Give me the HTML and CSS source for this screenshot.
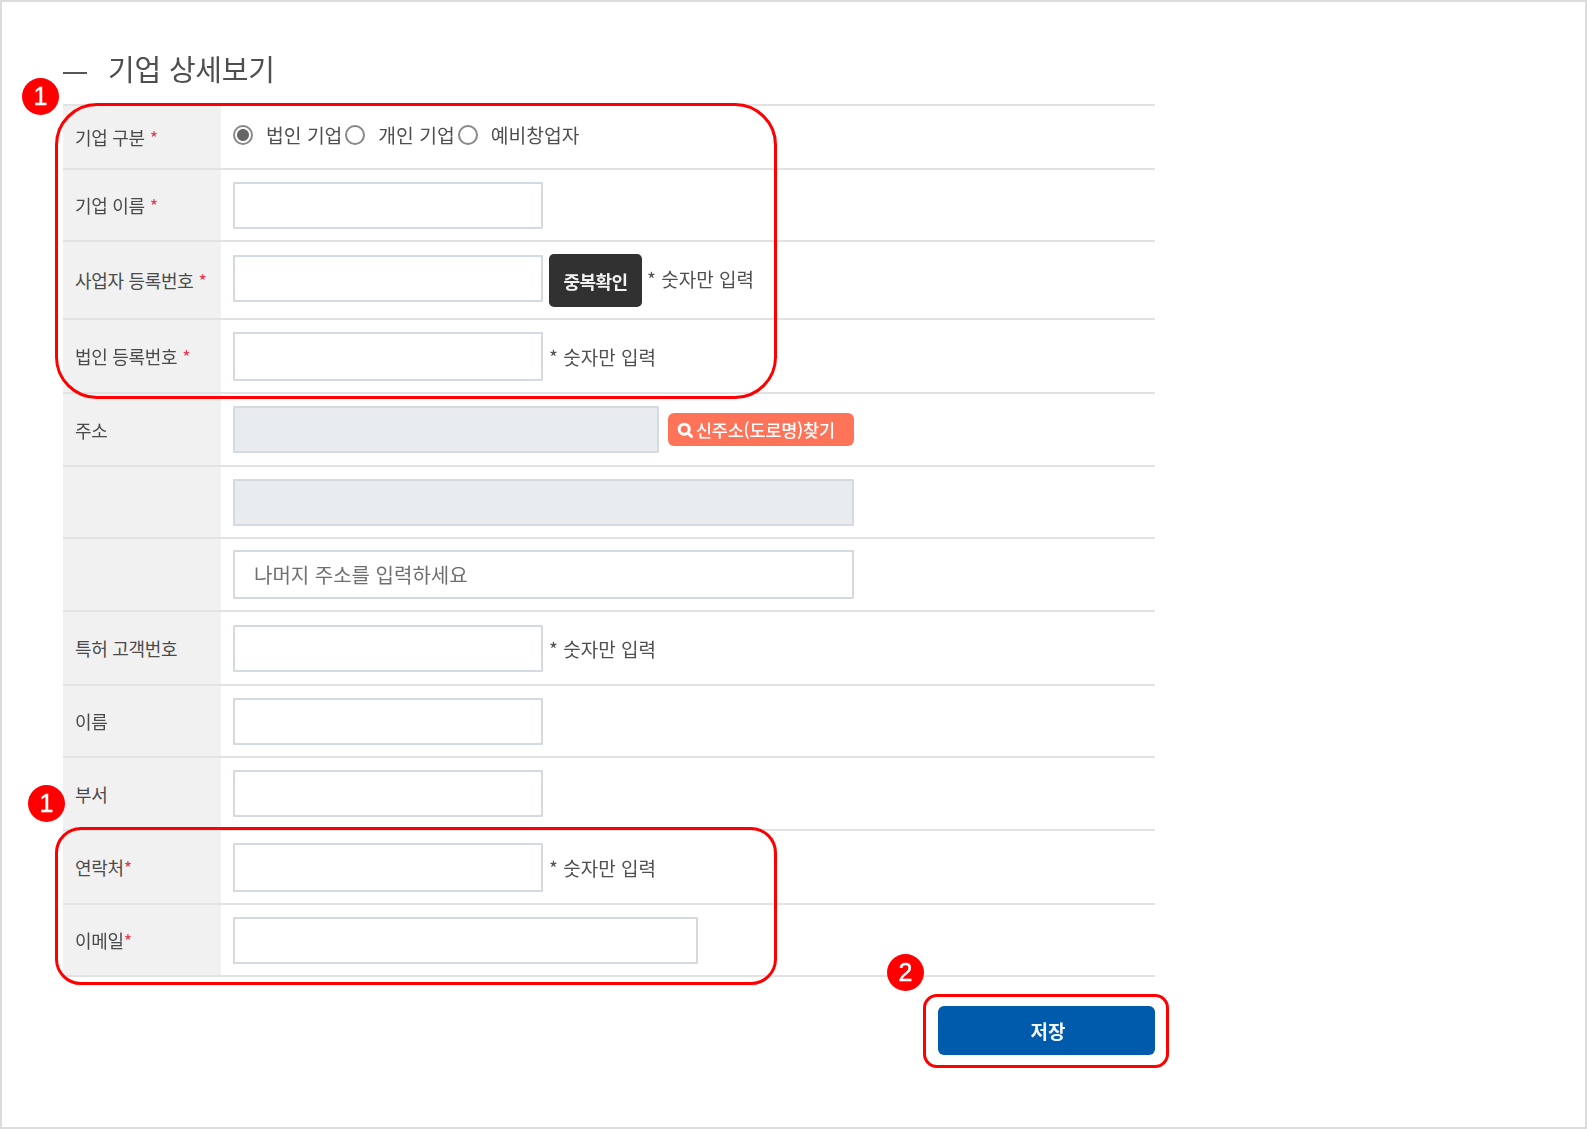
FILE: index.html
```html
<!DOCTYPE html>
<html lang="ko">
<head>
<meta charset="utf-8">
<title>기업 상세보기</title>
<link rel="stylesheet" href="styles.css">
</head>
<body>
<main class="frame">
  <h1 class="title"><span class="dash"></span>기업 상세보기</h1>
  <form class="form">
    <div class="label">기업 구분<em>*</em></div>
    <div class="value radios">
      <label class="radio"><input type="radio" name="kind" checked>법인 기업</label>
      <label class="radio"><input type="radio" name="kind">개인 기업</label>
      <label class="radio"><input type="radio" name="kind">예비창업자</label>
    </div>

    <div class="label">기업 이름<em>*</em></div>
    <div class="value"><input class="field"></div>

    <div class="label">사업자 등록번호<em>*</em></div>
    <div class="value"><input class="field lift"><button type="button" class="btn-dark">중복확인</button><span class="hint hint-tight">* 숫자만 입력</span></div>

    <div class="label">법인 등록번호<em>*</em></div>
    <div class="value"><input class="field tall"><span class="hint">* 숫자만 입력</span></div>

    <div class="label">주소</div>
    <div class="value"><input class="field addr" disabled><button type="button" class="btn-orange"><svg class="search" viewBox="0 0 16 16" width="16" height="16"><circle cx="7.2" cy="7.2" r="5" fill="none" stroke="#fff" stroke-width="3"/><path d="M11 11L14.5 14.5" stroke="#fff" stroke-width="3" stroke-linecap="round"/></svg>신주소(도로명)찾기</button></div>

    <div class="label"></div>
    <div class="value"><input class="field full" disabled></div>

    <div class="label"></div>
    <div class="value"><input class="field full tall" placeholder="나머지 주소를 입력하세요"></div>

    <div class="label">특허 고객번호</div>
    <div class="value"><input class="field"><span class="hint">* 숫자만 입력</span></div>

    <div class="label">이름</div>
    <div class="value"><input class="field"></div>

    <div class="label">부서</div>
    <div class="value"><input class="field"></div>

    <div class="label">연락처<em class="tight">*</em></div>
    <div class="value"><input class="field tall"><span class="hint">* 숫자만 입력</span></div>

    <div class="label">이메일<em class="tight">*</em></div>
    <div class="value"><input class="field email"></div>
  </form>
  <div class="actions"><button type="button" class="btn-save">저장</button></div>

  <div class="mark box-a"></div>
  <div class="mark box-b"></div>
  <div class="mark box-c"></div>
  <div class="badge badge-a">1</div>
  <div class="badge badge-b">1</div>
  <div class="badge badge-c">2</div>
</main>
</body>
</html>
```
FILE: styles.css
```css
* { box-sizing: border-box; }
html, body { margin: 0; background: #fff; }
body { font-family: "Noto Sans CJK KR", "Noto Sans", sans-serif; color: #4f4f4f; }

.frame {
  position: relative;
  width: 1587px;
  height: 1129px;
  border: 2px solid #dcdcdc;
  padding: 0 0 0 61px;
}

.title {
  display: flex;
  align-items: center;
  margin: 0;
  height: 102px;
  padding-top: 30px;
  font-size: 29px;
  font-weight: 400;
  letter-spacing: -0.2px;
  color: #4f4f4f;
  filter: blur(0.45px);
}
.dash {
  width: 24px;
  height: 2px;
  margin: 9px 21px 0 0;
  background: #555;
}

.form {
  display: grid;
  width: 1092px;
  grid-template-columns: 158px 1fr;
  grid-template-rows: 64px 72px 78px 74px 73px 72px 73px 74px 72px 73px 74px 72px;
  border-top: 2px solid #e2e2e2;
  filter: blur(0.45px);
}

.label, .value {
  display: flex;
  align-items: center;
  border-bottom: 2px solid #e2e2e2;
}
.label {
  padding-left: 12px;
  background: #f1f1f1;
  font-size: 18px;
  letter-spacing: -0.3px;
  color: #4a4a4a;
}
.label em {
  margin-left: 5px;
  font-style: normal;
  color: #e8344e;
}
.label em.tight { margin-left: 0; }
.value { padding-left: 12px; }

.field {
  width: 310px;
  height: 47px;
  border: 2px solid #d5dae0;
  border-radius: 1px;
  background: #fff;
  padding: 0 19px;
  font: 20px "Noto Sans CJK KR", sans-serif;
  outline: none;
}
.field::placeholder { color: #6f6f6f; opacity: 1; }
.tall { height: 49px; }
.lift { margin-top: -4px; }
.addr { width: 426px; }
.full { width: 621px; }
.field.full:disabled, .field.addr:disabled { background: #e9ecef; }
.email { width: 465px; }

.hint {
  margin-left: 6px;
  font-size: 19px;
  color: #4f4f4f;
  white-space: nowrap;
}
.hint-tight { margin-top: -4px; margin-left: 5px; }

.radios { padding-bottom: 5px; }
.radio {
  display: flex;
  align-items: center;
  font-size: 19.3px;
  color: #4f4f4f;
  white-space: nowrap;
}
.radio input {
  appearance: none;
  width: 20px;
  height: 20px;
  margin: 0 13px 0 0;
  border: 2px solid #888;
  border-radius: 50%;
  background: #fff;
}
.radio input:checked {
  background: radial-gradient(circle, #666 0 5.5px, #fff 6.5px);
}
.radio + .radio { margin-left: 3px; }

.btn-dark {
  width: 93px;
  height: 53px;
  margin: 0 0 0 6px;
  padding: 2px 0 0;
  border: 0;
  border-radius: 5px;
  background: #313131;
  color: #f2f2f2;
  font: 700 18px "Noto Sans CJK KR", sans-serif;
  letter-spacing: -0.5px;
}

.btn-orange {
  display: flex;
  align-items: center;
  justify-content: flex-start;
  width: 186px;
  height: 33px;
  margin-left: 9px;
  padding: 0 0 0 9px;
  border: 0;
  border-radius: 6px;
  background: #ff7359;
  color: #fff;
  font: 500 17.5px "Noto Sans CJK KR", sans-serif;
  letter-spacing: -0.25px;
}
.search { margin-right: 3px; flex: none; }

.actions {
  display: flex;
  justify-content: flex-end;
  width: 1092px;
  padding-top: 29px;
}
.btn-save {
  width: 217px;
  height: 49px;
  padding: 0 0 0 3px;
  border: 0;
  border-radius: 6px;
  background: #005bac;
  color: #f2f6fb;
  font: 700 19px "Noto Sans CJK KR", sans-serif;
  filter: blur(0.3px);
}

.mark {
  position: absolute;
  border: 3px solid #f00;
  pointer-events: none;
}
.box-a { left: 53px; top: 101px; width: 722px; height: 296px; border-radius: 42px; }
.box-b { left: 53px; top: 825px; width: 722px; height: 158px; border-radius: 26px; }
.box-c { left: 921px; top: 992px; width: 246px; height: 74px; border-radius: 14px; }

.badge {
  position: absolute;
  display: flex;
  align-items: center;
  justify-content: center;
  width: 37px;
  height: 37px;
  border-radius: 50%;
  background: #f00;
  color: #fff;
  font: 400 25px "Liberation Sans", sans-serif;
  -webkit-text-stroke: 0.4px #fff;
}
.badge-a { left: 20px; top: 76px; }
.badge-b { left: 26px; top: 783px; }
.badge-c { left: 885px; top: 952px; }
```
